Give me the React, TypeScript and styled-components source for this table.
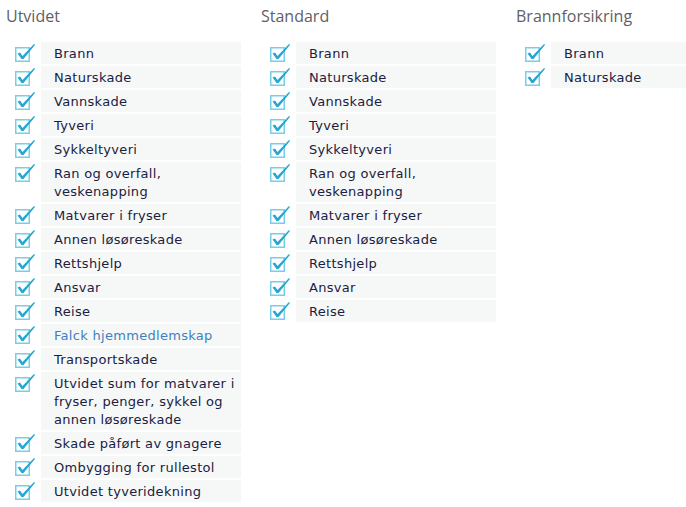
import React from "react";
import styled, { createGlobalStyle } from "styled-components";

const Global = createGlobalStyle`
  html, body { margin: 0; padding: 0; background: #ffffff; }
  body { font-family: "DejaVu Sans", Verdana, sans-serif; }
`;

const Page = styled.div`
  display: flex;
  padding-left: 6px;
  width: 686px;
  box-sizing: border-box;
  overflow: hidden;
`;

const Column = styled.section`
  width: 255px;
  flex: none;
`;

const Title = styled.h2`
  margin: 0;
  height: 42px;
  padding-top: 5px;
  box-sizing: border-box;
  font-family: "Open Sans", "Noto Sans", sans-serif;
  font-weight: 400;
  font-size: 16px;
  line-height: 22px;
  color: #5f5f66;
`;

const List = styled.ul`
  list-style: none;
  margin: 0;
  padding: 0;
`;

const Row = styled.li`
  display: flex;
  align-items: flex-start;
  margin-bottom: 2px;
`;

const Box = styled.span`
  width: 35px;
  flex: none;
  padding-left: 8px;
  box-sizing: border-box;
  display: block;
  height: 20px;
`;

const Label = styled.span<{ $link?: boolean }>`
  width: 200px;
  flex: none;
  box-sizing: border-box;
  background: #f6f8f8;
  padding: 3px 4px 1px 13px;
  font-family: "DejaVu Sans", Verdana, sans-serif;
  font-size: 13px;
  line-height: 18px;
  letter-spacing: 0.3px;
  color: ${(p) => (p.$link ? "#3f7fbf" : "#1c2040")};
`;

const Check = () => (
  <svg width="24" height="20" viewBox="0 0 24 20">
    <rect x="1.75" y="5.75" width="13.5" height="13.5" fill="#ffffff" stroke="#76cfe7" strokeWidth="1.5" />
    <path d="M3.5 11.5 L6 10.5 L8.5 14 L19.5 2.5 L21 2 L20.5 3.5 L9.5 17 L7.5 17 Z" fill="#27a6d2" />
  </svg>
);

type Item = { text: string; link?: boolean };

const utvidet: Item[] = [
  { text: "Brann" },
  { text: "Naturskade" },
  { text: "Vannskade" },
  { text: "Tyveri" },
  { text: "Sykkeltyveri" },
  { text: "Ran og overfall, veskenapping" },
  { text: "Matvarer i fryser" },
  { text: "Annen løsøreskade" },
  { text: "Rettshjelp" },
  { text: "Ansvar" },
  { text: "Reise" },
  { text: "Falck hjemmedlemskap", link: true },
  { text: "Transportskade" },
  { text: "Utvidet sum for matvarer i fryser, penger, sykkel og annen løsøreskade" },
  { text: "Skade påført av gnagere" },
  { text: "Ombygging for rullestol" },
  { text: "Utvidet tyveridekning" },
];

const standard: Item[] = utvidet.slice(0, 11);
const brann: Item[] = utvidet.slice(0, 2);

const columns = [
  { title: "Utvidet", items: utvidet },
  { title: "Standard", items: standard },
  { title: "Brannforsikring", items: brann },
];

export default function App() {
  return (
    <>
      <Global />
      <Page>
        {columns.map((c) => (
          <Column key={c.title}>
            <Title>{c.title}</Title>
            <List>
              {c.items.map((it) => (
                <Row key={it.text}>
                  <Box>
                    <Check />
                  </Box>
                  <Label $link={it.link}>{it.text}</Label>
                </Row>
              ))}
            </List>
          </Column>
        ))}
      </Page>
    </>
  );
}
